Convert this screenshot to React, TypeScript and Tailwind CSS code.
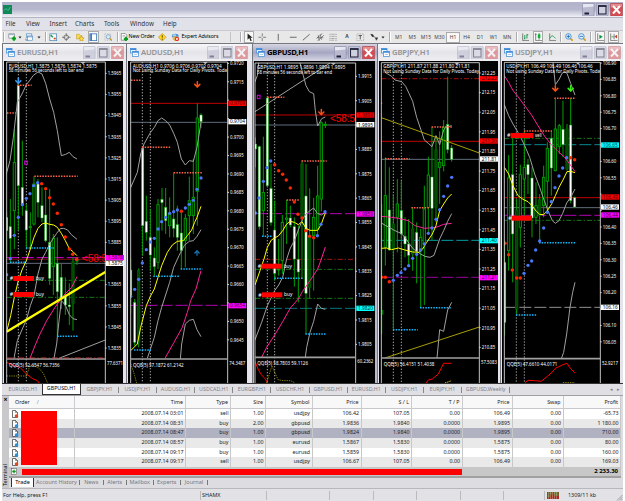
import React from 'react';
import { ArrowDown, ArrowUp } from 'lucide-react';

type Candle = [x: number, high: number, low: number, top: number, bottom: number, kind: 'w' | 'g' | 'd'];
type Level = [y: number, color: string, dash?: string];

interface ChartProps {
  title: string;
  active?: boolean;
  // canvas is drawn at three units per pixel
  view: [x: number, y: number, width: number, height: number];
  frame: [left: number, top: number, right: number, bottom: number];
  info: string[];
  infoWidths: number[];
  qqe: string;
  corner: string;
  grid: number[];
  candles: Candle[];
  lines: [color: string, points: string, width?: number, dash?: string][];
  levels: Level[];
  orange: [number, number, number][];
  cyan: [number, number, number][];
  blueDots: string;
  redDots: string;
  axis: string[];
  axisStart: number;
  axisStep: number;
  tags: [y: number, text: string, bg: string, fg: string][];
  arrows?: [x: number, y: number, color: string, up?: boolean][];
  squares?: [number, number][];
  orders?: [y: number, x: number, width: number, side: string][];
  countdown?: [number, number];
}

const GRAY = '#a0a0a0';
const YELLOW = '#ffff00';
const PINK = '#ff1f9a';
const RED = '#ff0000';
const MAGENTA = '#ff00ff';
const GREEN = '#00a000';
const SLATE = '#708090';

const Chart: React.FC<ChartProps> = (p) => {
  const [left, top, right, bottom] = p.frame;
  const id = `clip-${p.title.replace(',', '')}`;
  const dots = (s: string) => s.split(' ').filter(Boolean).map((d) => d.split(',').map(Number));
  return (
    <svg
      viewBox={p.view.join(' ')}
      width={p.view[2] / 3}
      height={p.view[3] / 3}
      className="block shrink-0 overflow-visible bg-black"
      fontFamily='"Noto Sans", "Open Sans", sans-serif'
    >
      <clipPath id={id}>
        <rect x={left} y={top} width={right - left} height={1017 - top} />
      </clipPath>
      <g clipPath={`url(#${id})`}>
        {p.grid.map((x) => (
          <line key={x} x1={x} x2={x} y1={top} y2="1017" stroke="#c8c8c8" strokeWidth="2.5" strokeDasharray="4 5" />
        ))}
        {p.levels.map(([y, color, dash]) => (
          <line key={y} x1={left} x2={right} y1={y} y2={y} stroke={color} strokeWidth="2.6" strokeDasharray={dash} />
        ))}
        {p.candles.map(([x, high, low, bodyTop, bodyBottom, kind], i) => (
          <g key={i}>
            <line x1={x} x2={x} y1={high} y2={low} stroke={GREEN} strokeWidth="3" />
            <rect
              x={x - 3.5}
              y={bodyTop}
              width="7"
              height={Math.max(3, bodyBottom - bodyTop)}
              fill={kind === 'w' ? '#fff' : kind === 'g' ? '#001800' : '#004800'}
              stroke={kind === 'd' ? '#005c00' : '#00a800'}
              strokeWidth={kind === 'w' ? 1.5 : 2.5}
            />
          </g>
        ))}
        {p.lines.map(([color, points, width = 3, dash], i) => (
          <polyline key={i} points={points} fill="none" stroke={color} strokeWidth={width} strokeDasharray={dash} />
        ))}
        {p.orange.map(([a, b, y], i) => (
          <line key={i} x1={a} x2={b} y1={y} y2={y} stroke="#ff6347" strokeWidth="4.5" strokeDasharray="4.5 3.5" />
        ))}
        {p.cyan.map(([a, b, y], i) => (
          <line key={i} x1={a} x2={b} y1={y} y2={y} stroke="#10b8ff" strokeWidth="4.5" strokeDasharray="4.5 3.5" />
        ))}
        {dots(p.blueDots).map(([x, y], i) => (
          <circle key={i} cx={x} cy={y} r="5" fill="#4878f8" />
        ))}
        {dots(p.redDots).map(([x, y], i) => (
          <circle key={i} cx={x} cy={y} r="5.2" fill="#f82800" />
        ))}
        {p.squares?.map(([x, y], i) => (
          <rect key={i} x={x - 4} y={y - 5} width="8" height="10" fill="none" stroke="#d000e0" strokeWidth="3" />
        ))}
        {p.orders?.map(([y, x, width, side], i) => (
          <g key={i}>
            <text x={x - 11} y={y + 6} fontSize="16" fill="#fff">#</text>
            <text x={x + width + 5} y={y + 5} fontSize="15" fill="#fff" textLength={side === 'buy' ? 25 : 20} lengthAdjust="spacingAndGlyphs">
              {side}
            </text>
            <rect x={x} y={y - 7} width={width} height="15" fill={RED} />
          </g>
        ))}
        {p.countdown && (
          <text
            x={p.countdown[0]}
            y={p.countdown[1]}
            fontSize="32"
            fill={RED}
            fontFamily='"Liberation Sans", sans-serif'
            textLength="92"
            lengthAdjust="spacingAndGlyphs"
          >
            &lt;58:56
          </text>
        )}
      </g>
      {p.arrows?.map(([x, y, color, up], i) =>
        up ? (
          <ArrowUp key={i} x={x - 11} y={y - 11} width={22} height={22} color={color} strokeWidth={4} />
        ) : (
          <ArrowDown key={i} x={x - 13} y={y - 13} width={26} height={26} color={color} strokeWidth={4.2} />
        )
      )}
      <path d={`M${left} 1017V${top}H${right}V1017`} fill="none" stroke="#e0e0e0" strokeWidth="2.6" />
      <path d={`M${left} ${bottom}H${right}`} stroke={GRAY} strokeWidth="5" />
      {p.title === 'EURUSD,H1' && (
        <path d={`M${left} ${bottom - 3}H${right}`} stroke="#d84848" strokeWidth="2.5" strokeDasharray="18 6 4 6" />
      )}
      <path d={`M${right - 74} ${top}h14l-7 7z`} fill="#b8c0c8" />
      {p.info.map((line, i) => (
        <text key={line} x={left + 6} y={top + 17 + i * 14.5} fontSize="14" fill="#fff" textLength={p.infoWidths[i]} lengthAdjust="spacingAndGlyphs">
          {line}
        </text>
      ))}
      <text x={left + 7} y={bottom + 23} fontSize="15" fill="#fff" textLength="152" lengthAdjust="spacingAndGlyphs">
        {p.qqe}
      </text>
      <text x={right + 5} y={bottom + 18} fontSize="15" fill="#fff" textLength="48" lengthAdjust="spacingAndGlyphs">
        {p.corner}
      </text>
      {p.axis.map((label, i) => {
        const y = p.axisStart + i * p.axisStep;
        // a label fully behind a price tag is left out
        const hidden = p.tags.some((tag) => Math.abs(tag[0] - y) < 12);
        return (
          <g key={label}>
            <line x1={right} x2={right + 4} y1={y} y2={y} stroke="#fff" strokeWidth="2.5" />
            {!hidden && (
              <text x={right + 7} y={y + 5.5} fontSize="15" fill="#fff" textLength="41" lengthAdjust="spacingAndGlyphs">
                {label}
              </text>
            )}
          </g>
        );
      })}
      {p.tags.map(([y, text, bg, fg]) => (
        <g key={text}>
          <rect x={right + 2} y={y - 8} width="54" height="16" fill={bg} />
          <text x={right + 7} y={y + 5.5} fontSize="15" fill={fg} textLength="45" lengthAdjust="spacingAndGlyphs">
            {text}
          </text>
        </g>
      ))}
    </svg>
  );
};

const LONG_DASH = '36 9';
const DASH_DOT = '15 6 4 6';

const charts: ChartProps[] = [
  {
    title: 'EURUSD,H1',
    view: [12, 51, 358, 966],
    frame: [20, 54, 316, 945],
    info: ['EURUSD,H1  1.5875 1.5876 1.5874 1.5875', '58 minutes 56 seconds left to bar end'],
    infoWidths: [265, 225],
    qqe: 'QQE(5) 52.6547 56.7356',
    corner: '77.6371',
    grid: [55, 79],
    candles: [
      [20, 505, 640, 520, 560, 'w'],
      [31, 465, 655, 548, 583, 'w'],
      [43, 255, 615, 355, 500, 'g'],
      [55, 118, 560, 125, 425, 'w'],
      [67, 290, 515, 430, 483, 'w'],
      [79, 480, 613, 500, 558, 'w'],
      [91, 505, 615, 548, 550, 'g'],
      [102, 397, 545, 420, 540, 'g'],
      [114, 405, 520, 420, 475, 'w'],
      [126, 430, 535, 485, 522, 'w'],
      [137, 440, 595, 513, 590, 'w'],
      [149, 435, 723, 595, 703, 'w'],
      [160, 570, 753, 583, 668, 'g'],
      [172, 580, 878, 658, 743, 'w'],
      [184, 660, 795, 700, 763, 'w'],
      [196, 700, 813, 758, 783, 'w'],
      [208, 718, 843, 783, 788, 'w'],
      [219, 640, 860, 653, 778, 'd'],
      [231, 640, 663, 648, 651, 'g'],
    ],
    lines: [
      [GRAY, '18,393 30,350 40,280 52,175 66,150 79,122 90,108 100,94 114,84 126,90 137,118 149,165 161,205 172,260 184,335 197,331 208,325 219,338 231,345'],
      [YELLOW, '20,863 32,815 43,760 55,710 66,678 79,650 91,615 102,580 114,553 126,540 137,537 149,541 161,543 172,550 184,568 196,590 208,614 219,623 231,635'],
      [GRAY, '42,943 52,890 67,855 79,828 91,785 102,755 114,690 126,645 137,625 149,600 160,583 170,568 181,554 191,553 203,558 214,572 231,586'],
      [PINK, '90,943 105,905 120,870 140,830 165,790 190,755 215,730 231,698'],
      [GRAY, '162,943 170,900 176,840 184,770 190,776 198,788 208,812 219,824 231,827'],
      [GRAY, '177,943 316,888'],
      [YELLOW, '20,863 316,684', 7],
      [RED, '20,955 42,965 60,970 79,990 98,1004 112,1010 120,1020', 3],
      ['#a09800', '20,996 80,996', 2.5, '4 3'],
      ['#a09800', '79,996 90,965 102,965 116,972 130,988 144,1020', 2.5, '4 3'],
    ],
    levels: [[641, MAGENTA, LONG_DASH], [646, '#8c1010'], [658, SLATE], [709, '#188c18', DASH_DOT], [760, '#188c18', DASH_DOT]],
    orange: [[21, 48, 207], [52, 95, 124], [103, 233, 397]],
    cyan: [[30, 75, 655], [78, 162, 612], [172, 233, 877]],
    blueDots: '20,692 31,644 43,574 55,520 67,482 79,463 90,449 101,425 113,416',
    redDots: '125,419 137,434 149,461 160,480 172,508 184,542 196,579 208,615 218,631 230,646',
    axis: ['1.5965', '1.5955', '1.5945', '1.5935', '1.5925', '1.5915', '1.5905', '1.5895', '1.5885', '1.5875', '1.5865', '1.5855', '1.5845', '1.5835'],
    axisStart: 88,
    axisStep: 63.4,
    tags: [[641, '1.5878', MAGENTA, '#400040'], [658, '1.5875', '#fff', '#000']],
    arrows: [[55, 110, '#3c9cf0']],
    squares: [[78, 356]],
    orders: [[703, 40, 62, 'buy'], [751, 40, 62, 'buy']],
    countdown: [246, 655],
  },
  {
    title: 'AUDUSD,H1',
    view: [12, 51, 358, 966],
    frame: [20, 54, 311, 945],
    info: ['AUDUSD,H1  0.9706 0.9706 0.9702 0.9704', 'Not using Sunday Data for Daily Pivots.   Toda'],
    infoWidths: [267, 283],
    qqe: 'QQE(5) 57.1872 61.2142',
    corner: '74.3487',
    grid: [55, 79],
    candles: [
      [20, 643, 808, 678, 758, 'w'],
      [32, 765, 905, 775, 895, 'w'],
      [44, 673, 910, 680, 895, 'd'],
      [56, 309, 635, 312, 545, 'w'],
      [67, 455, 590, 532, 565, 'w'],
      [79, 495, 680, 580, 633, 'w'],
      [91, 610, 695, 642, 668, 'w'],
      [102, 465, 675, 482, 655, 'g'],
      [114, 432, 560, 466, 476, 'w'],
      [125, 432, 570, 490, 530, 'w'],
      [137, 460, 580, 510, 545, 'g'],
      [149, 386, 580, 525, 553, 'w'],
      [160, 485, 620, 542, 580, 'w'],
      [172, 498, 675, 567, 620, 'w'],
      [184, 510, 670, 523, 590, 'g'],
      [196, 398, 590, 470, 515, 'g'],
      [208, 345, 570, 460, 515, 'g'],
      [220, 178, 545, 222, 442, 'g'],
      [231, 208, 252, 213, 233, 'w'],
    ],
    lines: [
      [GRAY, '20,431 40,385 50,330 60,300 79,266 91,250 102,230 113,222 125,230 137,243 149,268 160,295 172,345 184,363 196,350 208,352 219,310 231,235'],
      [YELLOW, '20,920 40,900 50,850 67,785 79,757 91,735 102,700 113,665 130,625 145,603 160,592 178,590 190,575 203,558 212,535 219,520 231,487'],
      [GRAY, '70,943 91,880 102,830 113,790 137,715 149,670 165,635 181,604 196,592 208,590 219,577 231,557'],
      [PINK, '123,943 150,895 175,850 190,805 200,770 216,735 231,680'],
      [GRAY, '169,945 173,900 184,840 196,829 208,826 219,857 231,878'],
      ['#a09800', '20,960 26,975 32,995 38,1018', 2.5, '4 3'],
    ],
    levels: [[178, '#e00000'], [235, SLATE], [784, '#d000d0', LONG_DASH]],
    orange: [[21, 50, 109], [54, 142, 310], [149, 235, 386]],
    cyan: [[88, 165, 697], [170, 235, 675], [30, 81, 918]],
    blueDots: '20,757 32,736 44,706 55,657 67,617 79,594 91,583 102,555 113,533 125,520 137,508 149,503 160,498 184,492 196,481 208,469 219,436 231,402',
    redDots: '172,502',
    axis: ['0.9720', '0.9715', '0.9710', '0.9705', '0.9700', '0.9695', '0.9690', '0.9685', '0.9680', '0.9675', '0.9670', '0.9665', '0.9660', '0.9655', '0.9650', '0.9645'],
    axisStart: 58,
    axisStep: 55.3,
    tags: [[178, '0.9709', RED, '#500000'], [233, '0.9704', '#fff', '#000'], [785, '0.9654', MAGENTA, '#400040']],
    arrows: [[220, 121, '#f85018'], [219, 627, '#1878c0', true]],
  },
  {
    title: 'GBPUSD,H1',
    active: true,
    view: [12, 51, 363, 966],
    frame: [15, 57, 317, 940],
    info: ['GBPUSD,H1  1.9895 1.9896 1.9894 1.9895', '58 minutes 56 seconds left to bar end'],
    infoWidths: [265, 225],
    qqe: 'QQE(5) 58.7803 59.1126',
    corner: '60.2362',
    grid: [52, 74],
    candles: [
      [16, 280, 370, 300, 315, 'w'],
      [28, 305, 557, 308, 548, 'w'],
      [40, 278, 577, 445, 500, 'g'],
      [52, 158, 430, 162, 425, 'w'],
      [63, 360, 545, 433, 536, 'w'],
      [74, 470, 710, 558, 688, 'w'],
      [86, 585, 695, 675, 678, 'g'],
      [97, 513, 690, 535, 650, 'g'],
      [110, 468, 600, 522, 526, 'g'],
      [121, 485, 550, 522, 543, 'w'],
      [133, 520, 728, 548, 645, 'w'],
      [145, 545, 775, 646, 684, 'w'],
      [156, 350, 705, 360, 518, 'd'],
      [168, 360, 870, 456, 748, 'w'],
      [179, 433, 763, 580, 730, 'd'],
      [191, 462, 740, 520, 575, 'g'],
      [203, 365, 580, 456, 555, 'g'],
      [214, 232, 502, 236, 465, 'g'],
      [226, 232, 252, 241, 243, 'g'],
    ],
    lines: [
      [GRAY, '15,203 240,57'],
      [GRAY, '14,115 22,95 26,57'],
      [GRAY, '150,57 160,95 168,125 178,143 191,149 196,200 203,246 215,224 226,219'],
      [YELLOW, '15,723 30,680 42,645 52,610 64,588 86,575 98,560 110,540 121,532 133,535 145,542 156,533 168,553 180,559 203,559 214,540 226,507'],
      [GRAY, '14,890 35,835 52,785 74,740 86,723 98,700 110,645 121,612 133,590 145,558 158,525 168,510 180,500 191,492 202,508 214,513 226,505'],
      [PINK, '35,940 50,910 74,873 98,833 121,792 145,765 157,743 180,710 203,675 214,645 226,609'],
      [GRAY, '166,940 170,910 180,865 191,832 203,780 214,793 226,796'],
      [RED, '14,950 24,975 34,992 46,1005 55,1020'],
      ['#a09800', '50,1017 58,990 66,965 74,985 84,1007 100,1010 122,1010 135,1017', 2.5, '4 3'],
    ],
    levels: [
      [213, '#e00000'],
      [243, SLATE],
      [509, '#d000d0', LONG_DASH],
      [646, '#c01818', DASH_DOT],
      [676, '#188c18', DASH_DOT],
      [763, '#188c18', DASH_DOT],
      [793, '#008890', LONG_DASH],
    ],
    orange: [[52, 103, 160], [110, 150, 468], [155, 230, 351]],
    cyan: [[36, 68, 577], [73, 160, 703], [166, 228, 870]],
    blueDots: '16,507 27,462 40,412 51,371 62,351 202,575 213,541 225,503',
    redDots: '74,362 86,380 98,391 109,408 121,432 133,474 144,511 156,522 167,560 179,577 191,581',
    axis: ['1.9915', '1.9905', '1.9895', '1.9885', '1.9875', '1.9865', '1.9855', '1.9845', '1.9835', '1.9825', '1.9815', '1.9805'],
    axisStart: 97,
    axisStep: 73.1,
    tags: [
      [213, '1.9899', RED, '#500000'],
      [242, '1.9895', '#fff', '#000'],
      [510, '1.9859', MAGENTA, '#400040'],
      [793, '1.9820', '#00ffff', '#003838'],
    ],
    arrows: [[214, 204, '#f85018']],
    squares: [[26, 159]],
    orders: [[666, 34, 62, 'buy'], [752, 36, 61, 'buy']],
    countdown: [240, 235],
  },
  {
    title: 'GBPJPY,H1',
    view: [12, 51, 358, 966],
    frame: [19, 56, 313, 942],
    info: ['GBPJPY,H1  211.87 211.88 211.80 211.81', 'Not using Sunday Data for Daily Pivots.   Today'],
    infoWidths: [260, 287],
    qqe: 'QQE(5) 56.4151 51.4038',
    corner: '57.5083',
    grid: [55, 79],
    candles: [
      [20, 480, 870, 800, 810, 'g'],
      [31, 340, 665, 455, 610, 'g'],
      [43, 370, 620, 498, 618, 'w'],
      [55, 450, 858, 540, 615, 'd'],
      [67, 405, 625, 480, 520, 'g'],
      [79, 410, 670, 500, 570, 'w'],
      [90, 520, 640, 577, 600, 'w'],
      [101, 525, 665, 600, 634, 'w'],
      [113, 490, 680, 555, 630, 'd'],
      [125, 535, 718, 565, 622, 'w'],
      [137, 555, 790, 580, 620, 'g'],
      [148, 425, 783, 495, 600, 'g'],
      [160, 338, 570, 393, 490, 'g'],
      [171, 248, 590, 399, 493, 'w'],
      [183, 275, 535, 318, 490, 'd'],
      [194, 262, 480, 355, 370, 'g'],
      [206, 228, 382, 250, 365, 'g'],
      [218, 98, 328, 241, 317, 'w'],
      [230, 303, 353, 312, 346, 'w'],
    ],
    lines: [
      [GRAY, '30,85 50,97 60,108 80,113 92,127 102,148 113,172 125,220 137,255 148,288 160,298 171,308 183,275 194,302 206,258 212,250 230,245'],
      ['#a8a000', '19,221 313,327'],
      ['#a8a000', '30,942 313,849'],
      [PINK, '19,517 50,520 70,523 100,530 120,545 148,553 183,550 206,541 230,538'],
      [GRAY, '19,537 45,552 60,560 78,568 90,580 102,598 115,615 137,630 150,637 165,640 177,634 194,585 206,560 218,532 230,509'],
      [YELLOW, '19,613 35,612 50,617 70,612 90,618 113,624 132,625 143,615 155,595 172,570 183,545 194,500 206,480 218,462 230,450'],
      [GRAY, '186,942 190,900 194,857 206,862 218,798 230,775'],
      [RED, '153,1017 160,1008 172,1005 190,990 206,958 230,958'],
      ['#ffe000', '210,1017 230,1010', 3, '4 3'],
    ],
    levels: [[104, '#c01010', DASH_DOT], [292, '#e00000'], [346, SLATE], [589, '#00b8c0', LONG_DASH], [700, '#b000b0', LONG_DASH]],
    orange: [[17, 23, 178], [30, 104, 344], [109, 162, 491], [170, 232, 249]],
    cyan: [[54, 128, 857], [135, 231, 791]],
    blueDots: '55,709 67,694 78,686 90,675 101,665 113,643 125,631 137,618 148,600 160,568 171,552 183,526 194,497 206,457 218,426 230,400',
    redDots: '20,700 31,700 43,713',
    axis: ['212.25', '212.15', '212.05', '211.95', '211.85', '211.75', '211.65', '211.55', '211.45', '211.35', '211.25', '211.15', '211.05', '210.95', '210.85'],
    axisStart: 87,
    axisStep: 58.8,
    tags: [
      [104, '212.22', RED, '#500000'],
      [291, '211.90', RED, '#500000'],
      [345, '211.81', '#fff', '#000'],
      [590, '211.40', '#00ffff', '#003838'],
      [701, '211.21', MAGENTA, '#400040'],
    ],
  },
  {
    title: 'USDJPY,H1',
    view: [12, 51, 355, 966],
    frame: [19, 55, 307, 944],
    info: ['USDJPY,H1  106.49 106.49 106.46 106.46', 'Not using Sunday Data for Daily Pivots.   Toda'],
    infoWidths: [259, 281],
    qqe: 'QQE(5) 47.6610 44.0171',
    corner: '52.9217',
    grid: [55, 79],
    candles: [
      [20, 590, 875, 655, 835, 'w'],
      [32, 333, 680, 402, 620, 'g'],
      [44, 270, 715, 392, 570, 'w'],
      [56, 465, 810, 498, 795, 'd'],
      [67, 362, 610, 392, 550, 'g'],
      [79, 262, 530, 370, 405, 'g'],
      [90, 345, 450, 362, 392, 'w'],
      [102, 370, 580, 402, 522, 'w'],
      [114, 415, 540, 485, 520, 'g'],
      [125, 450, 595, 467, 515, 'd'],
      [137, 365, 520, 400, 485, 'g'],
      [148, 295, 505, 313, 412, 'g'],
      [160, 262, 455, 283, 372, 'w'],
      [172, 165, 382, 255, 380, 'g'],
      [184, 240, 330, 245, 308, 'g'],
      [195, 170, 340, 256, 302, 'w'],
      [207, 240, 380, 255, 375, 'd'],
      [218, 162, 478, 243, 470, 'w'],
      [230, 458, 490, 461, 489, 'w'],
    ],
    lines: [
      [GRAY, '165,55 172,122 184,105 192,88 200,83 207,88 218,118 231,153'],
      [PINK, '19,95 32,115 44,138 60,158 80,185 100,212 120,245 140,277 160,302 180,322 200,340 215,360 231,383'],
      [GRAY, '19,182 32,215 45,240 60,265 78,300 95,340 110,390 125,430 137,465 150,500 163,530 172,538 183,530 194,508 206,477 218,460 231,435'],
      [YELLOW, '19,370 32,390 45,425 60,455 75,466 90,473 102,485 115,502 125,511 137,512 150,497 162,478 172,455 183,430 195,408 207,383 218,382 231,386'],
      [GRAY, '190,944 197,925 206,870 216,790 224,745 231,715'],
      [RED, '78,1020 90,1009 110,1010 130,1012 148,997 160,987 172,973 195,962 207,958 218,974 231,987'],
      ['#ffe000', '195,1017 231,1017', 3, '4 3'],
    ],
    levels: [
      [283, '#188c18', DASH_DOT],
      [302, '#00a0a8', LONG_DASH],
      [461, '#e00000'],
      [491, SLATE],
      [514, '#d000d0', LONG_DASH],
      [529, '#188c18', DASH_DOT],
      [790, '#a8a8a8', LONG_DASH],
    ],
    orange: [[78, 162, 261], [169, 233, 163]],
    cyan: [[54, 117, 813], [123, 233, 596]],
    blueDots: '78,688 90,664 101,651 113,618 125,591 137,552 148,505 160,473 171,431 183,396 194,372 206,341',
    redDots: '21,598 32,632 43,678 56,702 67,702 218,341 230,347',
    axis: ['106.90', '106.85', '106.80', '106.75', '106.70', '106.65', '106.60', '106.55', '106.50', '106.45', '106.40', '106.35', '106.30', '106.25', '106.20', '106.15', '106.10', '106.05'],
    axisStart: 57,
    axisStep: 49.2,
    tags: [
      [303, '106.65', '#00ffff', '#003838'],
      [459, '106.49', RED, '#500000'],
      [489, '106.46', '#fff', '#000'],
      [513, '106.44', MAGENTA, '#400040'],
      [790, '106.16', '#fff', '#000'],
    ],
    arrows: [[172, 133, '#f85018'], [218, 133, '#38f010']],
    orders: [[274, 38, 68, 'sell'], [522, 42, 60, '']],
  },
];

const ChartIcon = () => (
  <svg width="9" height="9" viewBox="0 0 18 18" className="shrink-0">
    <rect x="1" y="1" width="11" height="9" fill="#e8f4ff" stroke="#4c94d8" strokeWidth="1.6" />
    <path d="M1 2.5h11" stroke="#3c88d8" strokeWidth="3" />
    <rect x="5" y="7" width="12" height="10" fill="#fff" stroke="#4c94d8" strokeWidth="1.6" />
    <path d="M5 8h12" stroke="#3c88d8" strokeWidth="3" />
    <path d="M8 14l2-2 2 2 3-3" fill="none" stroke="#58a0d8" />
  </svg>
);

const WindowButtons = ({ faded }: { faded?: boolean }) => (
  <div className={`flex gap-[1.5px] ${faded ? 'opacity-50' : ''}`}>
    <svg width="12.5" height="13.5" viewBox="0 0 25 27">
      <rect x=".7" y=".7" width="23.6" height="25.6" rx="2" fill="#b9bad0" stroke="#8486a4" strokeWidth="1.2" />
      <path d="M2 9V2h21v5z" fill="#e6e7f0" />
      <path d="M5 21h9" stroke="#1c1c3c" strokeWidth="4" />
    </svg>
    <svg width="12.5" height="13.5" viewBox="0 0 25 27">
      <rect x=".7" y=".7" width="23.6" height="25.6" rx="2" fill="#c4c5d9" stroke="#8486a4" strokeWidth="1.2" />
      <rect x="5" y="6" width="15" height="16" fill="#d0d1e0" stroke="#25253c" strokeWidth="2.2" />
      <path d="M4 6h17" stroke="#25253c" strokeWidth="3.4" />
    </svg>
    <svg width="13" height="13.5" viewBox="0 0 26 27">
      <rect x=".7" y=".7" width="24.6" height="25.6" rx="2" fill="#d64c50" stroke="#a05060" strokeWidth="1.2" />
      <path d="M2 9V2h22v5z" fill="#e78c8c" />
      <path d="M6 6l14 15M20 6L6 21" stroke="#fff" strokeWidth="4" />
    </svg>
  </div>
);

const ChartWindow: React.FC<ChartProps & { className: string }> = ({ className, ...chart }) => (
  <section className={`flex h-[340px] shrink-0 flex-col overflow-hidden border-l border-l-[#77777f] pl-[1px] ${className}`}>
    <header
      className={`-ml-[1px] flex h-[18px] shrink-0 items-center border-t border-t-[#77777f] pl-[3px] ${
        chart.title === 'AUDUSD,H1' ? 'pr-[4.5px]' : 'pr-[2px]'
      } ${
        chart.active ? 'bg-linear-to-b from-[#d6d7e2] via-[#a5a6c2] to-[#d8d9e4]' : 'bg-linear-to-b from-[#f8f8fb] via-[#e4e4e9] to-[#efeff3]'
      }`}
    >
      <ChartIcon />
      <span
        className={`ml-[2px] flex-1 whitespace-nowrap text-[7.7px] leading-none ${
          chart.active ? 'font-bold tracking-[-0.25px] text-black' : 'font-semibold tracking-[-0.15px] text-[#929297]'
        }`}
      >
        {chart.title}
      </span>
      <WindowButtons faded={!chart.active} />
    </header>
    <Chart {...chart} />
  </section>
);

const windowSizes = [
  'w-[124px] bg-[#e4e4ea]',
  'w-[126px] bg-[#e4e4ea]',
  'w-[125px] bg-[#b8b9cc]',
  'w-[123px] bg-[#e4e4ea]',
  'w-[123px] bg-[#e4e4ea]',
];

// small toolbar drawings on a 20x20 grid
const glyphs: Record<string, React.ReactNode> = {
  newChart: (<><rect x="2" y="2" width="13" height="10" fill="#fff" stroke="#707880" strokeWidth="1.5" /><path d="M3 4h11" stroke="#78a0c0" strokeWidth="2" /><path d="M9 13h10M14 8v10" stroke="#08a018" strokeWidth="5" /></>),
  profiles: (<><rect x="3" y="2" width="13" height="9" fill="#eef6ff" stroke="#4c88b8" strokeWidth="1.5" /><rect x="6" y="7" width="12" height="10" fill="#fff" stroke="#4c88b8" strokeWidth="1.5" /><path d="M6 9h12M2 13v4h5" stroke="#5890c0" strokeWidth="2" fill="none" /></>),
  market: (<><rect x="2" y="2" width="16" height="16" fill="#fff" stroke="#4c88b8" strokeWidth="1.8" /><path d="M4 5l5 5" stroke="#20a040" strokeWidth="4" fill="none" /><path d="M11 13h5" stroke="#e04828" strokeWidth="4" /></>),
  target: (<><circle cx="10" cy="10" r="5.5" fill="none" stroke="#555" strokeWidth="1.6" /><path d="M10 0v8M10 12v8M0 10h8M12 10h8" stroke="#555" strokeWidth="1.6" /></>),
  favorites: (<><path d="M1 3h7l2 3h4v8H1z" fill="#f8d848" stroke="#b08820" /><path d="M13 7l2 4 4 .5-3 3 1 5-4-2-4 2 1-5-3-3 4-.5z" fill="#ffe040" stroke="#a87010" /></>),
  panel: (<><rect x="2" y="2" width="16" height="16" fill="#fff" stroke="#3878b8" strokeWidth="2" /><path d="M5 2v16" stroke="#3878b8" strokeWidth="4" /></>),
  tester: (<><path d="M2 2h14v15H2z" fill="#e8ecf0" stroke="#9098a0" strokeDasharray="3 2" /><circle cx="10" cy="9" r="5" fill="#d8ecf8" stroke="#6c90b0" strokeWidth="1.6" /><path d="M14 13l5 5" stroke="#c89020" strokeWidth="3" /></>),
  order: (<><path d="M3 1h9l4 4v12H3z" fill="#fff" stroke="#606870" strokeWidth="1.5" /><path d="M6 6h6M6 9h6" stroke="#606870" /><path d="M9 14h10M14 9v10" stroke="#08a018" strokeWidth="4.6" /></>),
  diamond: (<><path d="M10 1l9 9-9 9-9-9z" fill="#ffd820" stroke="#b88808" strokeWidth="1.4" /><path d="M10 5v6M10 13v3" stroke="#604000" strokeWidth="2.2" /></>),
  expert: (<><ellipse cx="10" cy="7" rx="8" ry="5" fill="#4898d8" /><path d="M4 8h12v8l-6 3-6-3z" fill="#e8b850" /><ellipse cx="8" cy="5" rx="4" ry="2" fill="#a8d8f8" /><circle cx="14" cy="14" r="5" fill="#e03020" /><rect x="12" y="12" width="4" height="4" fill="#fff" /></>),
  cursor: <path d="M6 1v15l4-4 3 7 3-1-3-7h5z" fill="#222" />,
  cross: <path d="M10 1v7M10 12v7M1 10h7M12 10h7" stroke="#555" strokeWidth="1.7" />,
  vline: <path d="M10 2v16" stroke="#444" strokeWidth="1.8" />,
  hline: <path d="M2 10h16" stroke="#444" strokeWidth="1.8" />,
  tline: <path d="M2 17L18 3" stroke="#444" strokeWidth="1.8" />,
  channel: <path d="M1 13L15 1M3 19L19 5M5 5l3 13M10 3l3 13M3 11h14" stroke="#555" strokeWidth="1.5" />,
  fibo: <path d="M1 3h18M1 8h18M1 13h18M1 17h12M15 17h4" stroke="#777" strokeWidth="1.6" strokeDasharray="2 1" />,
  label: (<><rect x="2" y="2" width="16" height="16" fill="none" stroke="#888" strokeDasharray="2 2" strokeWidth="1.5" /><path d="M6 6h8M10 6v9" stroke="#444" strokeWidth="2" /></>),
  arrowsTool: <path d="M2 3l5 1 1 5-3-1zM7 6l8 7M13 12l5-1-3 6z" fill="#333" stroke="#333" strokeWidth="1.5" />,
  bars: (<><path d="M4 1v17h16" fill="none" stroke="#555" strokeWidth="1.7" /><path d="M9 5v10M7 13h2M14 3v10M14 4h3" stroke="#18984c" strokeWidth="2.3" /></>),
  candles: (<><path d="M4 1v17h16M2 3h4" fill="none" stroke="#555" strokeWidth="1.7" /><path d="M12 0v16" stroke="#08882c" strokeWidth="1.7" /><rect x="9" y="3" width="6" height="9" fill="#10b03c" /></>),
  lineChart: (<><path d="M4 1v17h16" fill="none" stroke="#555" strokeWidth="1.7" /><path d="M5 12l4-6 4 2 5 5" fill="none" stroke="#18984c" strokeWidth="1.8" /></>),
  zoomIn: (<><path d="M12 12l7 7" stroke="#d8a020" strokeWidth="4" /><circle cx="8" cy="8" r="6.5" fill="#e0f2ff" stroke="#3c88d0" strokeWidth="2" /><path d="M4 8h8M8 4v8" stroke="#2468b0" strokeWidth="2" /></>),
  zoomOut: (<><path d="M12 12l7 7" stroke="#d8a020" strokeWidth="4" /><circle cx="8" cy="8" r="6.5" fill="#e0f2ff" stroke="#3c88d0" strokeWidth="2" /><path d="M4 8h8" stroke="#2468b0" strokeWidth="2" /></>),
  scroll: (<><path d="M4 1v17h16" fill="none" stroke="#555" strokeWidth="1.7" /><path d="M8 4l8 5-8 5z" fill="#109840" /></>),
  shift: (<><path d="M4 1v17h16M12 2v13" fill="none" stroke="#555" strokeWidth="1.7" /><path d="M19 4v9l-6-4.500z" fill="#c04020" /><path d="M6 9h5" stroke="#109840" strokeWidth="2" /></>),
};

const Glyph = ({ name, width, pressed }: { name: string; width: string; pressed?: boolean }) => (
  <div className={`flex h-[12px] shrink-0 items-center justify-center ${width}`}>
    <span className={pressed ? 'border border-[#aaa] bg-[#f7f7f7] py-[0.5px]' : ''}>
      <svg width="8.5" height="8.5" viewBox="0 0 20 20" className="block">
        {glyphs[name]}
      </svg>
    </span>
  </div>
);

const Caret = () => (
  <svg width="4" height="3" viewBox="0 0 8 6" className="shrink-0">
    <path d="M1 1h6L4 5z" fill="#222" />
  </svg>
);

const Grip = () => <i className="mx-[1px] block h-[10px] w-[2px] shrink-0 border-l border-l-[#aaaab0] bg-white" />;

const Toolbar = () => (
  <div className="flex h-[13px] items-center border-t border-t-[#c9c9cf] bg-[#e9e8e8] text-[5px] text-[#444]">
    <div className="flex w-[228px] shrink-0 items-center">
      <Grip />
      <Glyph name="newChart" width="w-[12px]" />
      <Caret />
      <Glyph name="profiles" width="w-[15px]" />
      <Caret />
      <span className="w-[3px]" />
      <Grip />
      <Glyph name="market" width="w-[11px]" />
      <Glyph name="target" width="w-[15px]" />
      <Glyph name="favorites" width="w-[13px]" />
      <Glyph name="panel" width="w-[13px]" pressed />
      <Glyph name="tester" width="w-[16px]" />
      <Grip />
      <Glyph name="order" width="w-[8.5px]" />
      <span className="w-[26px] whitespace-nowrap text-[5.3px] tracking-[-0.12px] text-black">New Order</span>
      <Glyph name="diamond" width="w-[16px]" />
      <Glyph name="expert" width="w-[10px]" />
      <span className="whitespace-nowrap pl-[1px] text-[5.3px] tracking-[-0.12px] text-black">Expert Advisors</span>
    </div>
    <span className="h-[10px] w-[9px] shrink-0 border-l border-l-[#c4c4c8]" />
    <Grip />
    <Glyph name="cursor" width="w-[12px]" pressed />
    <Glyph name="cross" width="w-[15px]" />
    <Glyph name="vline" width="w-[16px]" />
    <Glyph name="hline" width="w-[14px]" />
    <Glyph name="tline" width="w-[13px]" />
    <Glyph name="channel" width="w-[14px]" />
    <Glyph name="fibo" width="w-[13px]" />
    <b className="w-[14px] shrink-0 text-center">A</b>
    <Glyph name="label" width="w-[13px]" />
    <Glyph name="arrowsTool" width="w-[14px]" />
    <Caret />
    <span className="w-[3px]" />
    <Grip />
    {['M1', 'M5', 'M15', 'M30', 'H1', 'H4', 'D1', 'W1', 'MN'].map((period) => (
      <span
        key={period}
        className={`flex h-[11px] w-[13.55px] shrink-0 items-center justify-center leading-none ${period === 'H1' ? 'border border-[#aaa] bg-[#f8f8f8]' : ''}`}
      >
        {period}
      </span>
    ))}
    <span className="w-[1px]" />
    <Grip />
    <Glyph name="bars" width="w-[12px]" />
    <Glyph name="candles" width="w-[14px]" pressed />
    <Glyph name="lineChart" width="w-[14px]" />
    <Grip />
    <Glyph name="zoomIn" width="w-[12px]" />
    <Glyph name="zoomOut" width="w-[14px]" />
    <Grip />
    <Glyph name="scroll" width="w-[14px]" pressed />
    <Glyph name="shift" width="w-[13px]" pressed />
  </div>
);

const chartTabs = ['EURUSD,H1', 'GBPUSD,H1', 'GBPJPY,H1', 'USDJPY,H1', 'AUDUSD,H1', 'USDCAD,H1', 'EURGBP,H1', 'USDCHF,H1', 'GBPUSD,H1', 'EURUSD,H1', 'USDJPY,H1', 'EURJPY,H1', 'GBPUSD,Weekly'];

const headers = ['Order', 'Time', 'Type', 'Size', 'Symbol', 'Price', 'S / L', 'T / P', 'Price', 'Swap', 'Profit'];

const trades = [
  ['2008.07.14 03:01', 'sell', '1.00', 'usdjpy', '106.42', '107.05', '0.00', '106.49', '0.00', '-65.73'],
  ['2008.07.14 08:31', 'buy', '2.00', 'gbpusd', '1.9836', '1.9840', '0.0000', '1.9895', '0.00', '1 180.00'],
  ['2008.07.14 08:47', 'buy', '1.00', 'gbpusd', '1.9824', '1.9840', '0.0000', '1.9895', '0.00', '710.00'],
  ['2008.07.14 08:57', 'buy', '1.00', 'eurusd', '1.5867', '1.5830', '0.0000', '1.5875', '0.00', '80.00'],
  ['2008.07.14 09:17', 'buy', '1.00', 'eurusd', '1.5859', '1.5830', '0.0000', '1.5875', '0.00', '160.00'],
  ['2008.07.14 09:17', 'sell', '1.00', 'usdjpy', '106.67', '107.05', '0.00', '106.49', '0.00', '169.03'],
];

const columns = 'grid grid-cols-[66px_111px_45px_35px_46.5px_49px_50.5px_50.5px_50px_51px_57.5px]';

const TradeIcon = ({ color }: { color: string }) => (
  <svg width="8" height="8" viewBox="0 0 16 16">
    <path d="M3 1h6l4 4v10H3z" fill="#fff" stroke="#333" strokeWidth="1.4" />
    <path d="M9 1v4h4" fill="none" stroke="#333" />
    <circle cx="11" cy="12" r="3.6" fill={color} />
  </svg>
);

const Terminal = () => (
  <div className="flex h-[93px] border-t border-t-[#a0a0a4] bg-[#dddde1]">
    <div className="flex w-[7px] shrink-0 flex-col items-center justify-between bg-[#c9c9cc] pb-[2px] text-black">
      <span className="text-[7px] font-bold leading-[7px]">×</span>
      <span className="rotate-180 text-[5.4px] leading-[7px] [writing-mode:vertical-rl]">Terminal</span>
    </div>
    <div className="flex w-[612px] flex-col text-[5.3px] text-[#222]">
      <div className={`${columns} h-[13px] shrink-0 border-b border-b-[#c8c8cc] bg-[#f8f8f9]`}>
        {headers.map((header, i) => (
          <span key={i} className={`border-r border-r-[#ccccd0] leading-[13px] ${i === 0 ? 'pl-[6px]' : 'pr-[2px] text-right'}`}>
            {header}
            {i === 0 && <span className="pl-[7px] text-[#888]">/</span>}
          </span>
        ))}
      </div>
      <div className="relative">
        {trades.map((trade, row) => (
          <div
            key={row}
            className={`${columns} h-[9.7px] ${row === 2 ? 'bg-[#b0b1c1]' : row % 2 ? 'bg-[#e9e9e9]' : 'bg-white'}`}
          >
            <span className="flex items-center border-r border-r-[#c8c8c8] pl-[2px]">
              <TradeIcon color={trade[1] === 'buy' ? '#2890d8' : '#e04820'} />
            </span>
            {trade.map((value, i) => (
              <span key={i} className="whitespace-nowrap border-r border-r-[#c8c8c8] pr-[1.5px] text-right leading-[9.5px]">
                {value}
              </span>
            ))}
          </div>
        ))}
        <div className="absolute left-[12px] top-[2px] h-[54px] w-[36px] bg-[#ff0000]" />
      </div>
      <div className="flex h-[9px] shrink-0 items-center justify-between bg-[#c7c7c7] pl-[2px] pr-[3px]">
        <div className="flex items-center gap-[4.5px]">
          <svg width="6" height="7" viewBox="0 0 12 14">
            <rect x=".7" y="1" width="10.6" height="12" fill="#fff" stroke="#444" />
            <path d="M2.5 7h7M6 3.5v7" stroke="#109820" strokeWidth="2.6" />
          </svg>
          <div className="h-[6px] w-[440.5px] bg-[#ff0000]" />
        </div>
        <b className="text-[6px] text-black">2 233.30</b>
      </div>
      <div className="flex h-[11px] shrink-0 items-center border-t-2 border-t-[#a0a0a0] pl-[2px] text-[5.5px] leading-none text-[#77777c]">
        <span className="flex h-full w-[23px] items-center justify-center border-x border-x-[#333] bg-white text-black">Trade</span>
        <span className="w-[46px] border-r border-r-[#777] text-center">Account History</span>
        <span className="w-[23.5px] border-r border-r-[#777] text-center">News</span>
        <span className="w-[23.5px] border-r border-r-[#777] text-center">Alerts</span>
        <span className="w-[26.5px] border-r border-r-[#777] text-center">Mailbox</span>
        <span className="w-[27.5px] border-r border-r-[#777] text-center">Experts</span>
        <span className="w-[27px] border-r border-r-[#777] text-center">Journal</span>
      </div>
    </div>
  </div>
);

const StatusBar = () => (
  <footer className="flex h-[13px] items-center border-t border-t-[#b8b8bc] bg-[#e1e1e6] text-[5.4px] text-[#222]">
    <span className="w-[198px] pl-[1px]">For Help, press F1</span>
    <span className="h-[9px] w-[66px] border-l border-l-[#bbb] pl-[1px] leading-[9px]">SHAMX</span>
    <span className="h-[9px] w-[63px] border-l border-l-[#bbb]" />
    {[0, 1, 2, 3].map((i) => (
      <span key={i} className="h-[9px] w-[43.5px] border-l border-l-[#bbb]" />
    ))}
    <span className="h-[9px] w-[41px] border-l border-l-[#bbb]" />
    <span className="flex h-[9px] flex-1 items-center border-l border-l-[#bbb] pl-[2px]">
      <svg width="12" height="7" viewBox="0 0 24 14">
        <rect width="24" height="14" fill="#a82828" />
        <path d="M1 3h10M1 8h5M13 2h10M15 6h8" stroke="#508030" strokeWidth="4" />
        <path d="M3 0v14M7 0v14M11 0v14M15 0v14M19 0v14" stroke="#d8c8a0" strokeWidth=".8" />
      </svg>
      <span className="ml-[9px] leading-[9px]">1309/11 kb</span>
    </span>
    <svg width="7" height="7" viewBox="0 0 14 14" className="self-end">
      <path d="M2 13L13 2M6 13l7-7M10 13l3-3" stroke="#9a9aa0" strokeWidth="1.8" />
    </svg>
  </footer>
);

const App: React.FC = () => (
  <main className="h-[501px] w-[625px] overflow-hidden bg-white pl-[2px] pr-[2px] pt-[2px] font-['Noto_Sans','Open_Sans',sans-serif]">
    <div className="flex h-[15px] items-center justify-between bg-linear-to-b from-[#b2b3ca] via-[#b7b8ce] to-[#f0f0f5]">
      <svg width="9" height="9" viewBox="0 0 18 18" className="ml-[1px]">
        <rect width="18" height="18" fill="#108858" />
        <path d="M2 11l4-4 4 4 5-7" fill="none" stroke="#48c090" strokeWidth="2" />
      </svg>
      <WindowButtons />
    </div>
    <nav className="flex h-[13px] items-center border-t border-t-[#b4b5c4] bg-[#e0e1e9] text-[6.3px] leading-none text-[#333]">
      <span className="w-[20px] pl-[3.5px]">File</span>
      <span className="w-[24px] pl-[4px]">View</span>
      <span className="w-[26px] pl-[3.5px]">Insert</span>
      <span className="w-[28px] pl-[3px]">Charts</span>
      <span className="w-[27px] pl-[4px]">Tools</span>
      <span className="w-[32px] pl-[3px]">Window</span>
      <span className="pl-[4px]">Help</span>
    </nav>
    <Toolbar />
    <div className="flex h-[340px] w-[623px]">
      {charts.map((chart, i) => (
        <ChartWindow key={chart.title} {...chart} className={windowSizes[i]} />
      ))}
    </div>
    <div className="flex h-[12px] items-center border-t border-t-[#333] bg-[#dfdfe4] text-[5.3px] leading-none text-[#808086]">
      {chartTabs.map((tab, i) => (
        <span
          key={i}
          className={`flex shrink-0 items-center justify-center whitespace-nowrap ${
            i === 0
              ? 'w-[40px] pl-[2px]'
              : i === 1
                ? 'h-full w-[39px] border-x border-b border-[#333] bg-white text-black'
                : i === 12
                  ? 'h-[6px] w-[48.5px] border-r border-r-[#888]'
                  : 'h-[6px] w-[38.1px] border-r border-r-[#888]'
          }`}
        >
          {tab}
        </span>
      ))}
      <span className="ml-auto pr-[3px] text-[5px]">◂&nbsp;&nbsp;&nbsp;▸</span>
    </div>
    <Terminal />
    <StatusBar />
  </main>
);

export default App;
